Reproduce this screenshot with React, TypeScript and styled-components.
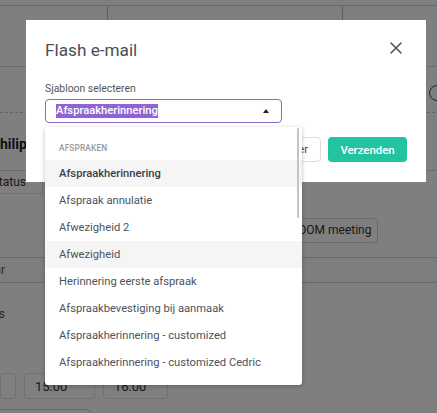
import styled, { createGlobalStyle } from 'styled-components';

const GlobalStyle = createGlobalStyle`
    html, body {
        margin: 0;
        padding: 0;
        background: #ffffff;
        font-family: Roboto, 'Liberation Sans', sans-serif;
    }
`;

const templates: string[] = [
    'Afspraakherinnering',
    'Afspraak annulatie',
    'Afwezigheid 2',
    'Afwezigheid',
    'Herinnering eerste afspraak',
    'Afspraakbevestiging bij aanmaak',
    'Afspraakherinnering - customized',
    'Afspraakherinnering - customized Cedric',
];

const selected = 'Afspraakherinnering';
const hovered = 'Afwezigheid';

const CloseIcon = () => (
    <svg width='12' height='12' viewBox='0 0 12 12'>
        <path
            d='M1 1 L11 11 M11 1 L1 11'
            stroke='#4f5660'
            strokeWidth='1.6'
            strokeLinecap='round'
        />
    </svg>
);

const Background = () => (
    <Page>
        <TopStrip />
        <HeaderRow>
            <HeaderCell />
            <HeaderCell />
            <HeaderCell $last />
        </HeaderRow>
        <IconRow>
            <RoundIcon />
        </IconRow>
        <NameRow>
            <Name>Philip</Name>
        </NameRow>
        <StatusRow>
            <StatusBox>Status</StatusBox>
        </StatusRow>
        <ZoomRow>
            <GhostButton>ZOOM meeting</GhostButton>
        </ZoomRow>
        <BandRow>
            <CutLabel>Locatie deur</CutLabel>
        </BandRow>
        <PlainRow>
            <CutLabel>Notities</CutLabel>
        </PlainRow>
        <TimeRow>
            <TimeBox $width={16} />
            <TimeBox $width={71}>15:00</TimeBox>
            <TimeBox $width={65}>16:00</TimeBox>
        </TimeRow>
        <FooterBox />
    </Page>
);

const App = () => (
    <>
        <GlobalStyle />
        <Viewport>
            <Background />
            <Overlay />
            <Modal>
                <ModalHeader>
                    <Title>Flash e-mail</Title>
                    <CloseButton>
                        <CloseIcon />
                    </CloseButton>
                </ModalHeader>
                <Label>Sjabloon selecteren</Label>
                <SelectWrap>
                    <SelectBox>
                        <SelectedText>{selected}</SelectedText>
                        <Caret />
                    </SelectBox>
                    <Dropdown>
                        <GroupTitle>Afspraken</GroupTitle>
                        {templates.map((t) => (
                            <Option
                                key={t}
                                $active={t === selected}
                                $hover={t === hovered}
                            >
                                {t}
                            </Option>
                        ))}
                        <ScrollThumb />
                    </Dropdown>
                </SelectWrap>
                <Actions>
                    <CancelButton>Annuleer</CancelButton>
                    <SendButton>Verzenden</SendButton>
                </Actions>
            </Modal>
        </Viewport>
    </>
);

const Viewport = styled.div`
    position: relative;
    width: 437px;
    height: 413px;
    overflow: hidden;
`;

const Page = styled.div`
    display: flex;
    flex-direction: column;
    color: #333;
    font-size: 13px;
`;

const TopStrip = styled.div`
    height: 5px;
    border-bottom: 1px solid #cfcfcf;
`;

const HeaderRow = styled.div`
    display: grid;
    grid-template-columns: 108px 235px 1fr;
    height: 60px;
    border-bottom: 1px solid #d8d8d8;
`;

const HeaderCell = styled.div<{ $last?: boolean }>`
    border-right: ${(p) => (p.$last ? 'none' : '1px solid #bdbdbd')};
`;

const IconRow = styled.div`
    display: flex;
    justify-content: flex-end;
    align-items: center;
    height: 45px;
    border-bottom: 1px dashed #c8c8c8;
    margin-right: -8px;
`;

const RoundIcon = styled.div`
    width: 14px;
    height: 14px;
    margin-top: 6px;
    border: 1.5px solid #444;
    border-radius: 50%;
`;

const NameRow = styled.div`
    height: 57px;
    display: flex;
    align-items: center;
    border-bottom: 1px solid #d6d6d6;
    overflow: hidden;
`;

const Name = styled.div`
    font-weight: 700;
    font-size: 14px;
    margin-left: -9px;
    margin-top: 4px;
    color: #222;
`;

const StatusRow = styled.div`
    display: flex;
    height: 47px;
    overflow: hidden;
`;

const StatusBox = styled.div`
    width: 60px;
    height: 23px;
    margin-left: -17px;
    border: 1px solid #e4e4e4;
    border-top: none;
    box-sizing: border-box;
    font-size: 12px;
    line-height: 23px;
    text-align: right;
    padding-right: 16px;
`;

const ZoomRow = styled.div`
    display: flex;
    justify-content: flex-end;
    padding-right: 59px;
    height: 39px;
`;

const GhostButton = styled.div`
    box-sizing: border-box;
    width: 88px;
    height: 25px;
    border: 1px solid #d4d4d4;
    border-radius: 4px;
    font-size: 12px;
    line-height: 23px;
    white-space: nowrap;
    text-align: right;
    padding-right: 8px;
`;

const BandRow = styled.div`
    height: 24px;
    border-top: 1px solid #d0d0d0;
    border-bottom: 1px solid #d0d0d0;
    background: #fdfdfd;
    display: flex;
    align-items: center;
    overflow: hidden;
`;

const PlainRow = styled.div`
    height: 38px;
    display: flex;
    align-items: center;
    overflow: hidden;
    margin-top: 12px;
`;

const CutLabel = styled.div`
    display: flex;
    justify-content: flex-end;
    width: 5px;
    white-space: nowrap;
    font-size: 12px;
    color: #555;
`;

const TimeRow = styled.div`
    display: flex;
    gap: 8px;
    margin-top: 40px;
    height: 26px;
`;

const TimeBox = styled.div<{ $width: number }>`
    width: ${(p) => p.$width}px;
    height: 26px;
    box-sizing: border-box;
    border: 1px solid #e2e2e2;
    border-radius: 3px;
    font-size: 13px;
    line-height: 26px;
    padding-left: 10px;
    color: #333;
`;

const FooterBox = styled.div`
    margin-top: 10px;
    width: 90px;
    height: 20px;
    border: 1px solid #d0d0d0;
    border-left: none;
    border-radius: 0 4px 0 0;
`;

const Overlay = styled.div`
    position: absolute;
    inset: 0;
    background: rgba(0, 0, 0, 0.5);
`;

const Modal = styled.div`
    position: absolute;
    left: 26px;
    top: 20px;
    width: 400px;
    height: 162px;
    box-sizing: border-box;
    background: #ffffff;
    padding: 19px 19px 0 19px;
    display: flex;
    flex-direction: column;
`;

const ModalHeader = styled.div`
    display: flex;
    justify-content: space-between;
    align-items: center;
    height: 22px;
`;

const Title = styled.h2`
    margin: 0;
    font-size: 17.2px;
    line-height: 22px;
    font-weight: 400;
    color: #4a4f55;
`;

const CloseButton = styled.div`
    display: flex;
    margin-right: 5px;
    margin-top: -4px;
`;

const Label = styled.div`
    margin-top: 21px;
    font-size: 10.4px;
    line-height: 13px;
    color: #555;
`;

const SelectWrap = styled.div`
    position: relative;
    margin-top: 4px;
    width: 237px;
`;

const SelectBox = styled.div`
    box-sizing: border-box;
    height: 24px;
    border: 1px solid #8c66c4;
    border-radius: 4px;
    display: flex;
    align-items: center;
    justify-content: space-between;
    padding: 0 12px 0 10px;
`;

const SelectedText = styled.span`
    background: #9063d3;
    color: #ffffff;
    font-size: 11.2px;
    font-weight: 500;
    line-height: 14px;
`;

const Caret = styled.span`
    width: 0;
    height: 0;
    border-left: 3px solid transparent;
    border-right: 3px solid transparent;
    border-bottom: 4px solid #222;
    margin-top: -1px;
`;

const Dropdown = styled.div`
    position: absolute;
    top: 28px;
    left: 0;
    width: 257px;
    height: 258px;
    box-sizing: border-box;
    background: #ffffff;
    border-radius: 3px;
    box-shadow: 0 1px 4px rgba(0, 0, 0, 0.25);
    padding-top: 13px;
    overflow: hidden;
    z-index: 2;
`;

const GroupTitle = styled.div`
    font-size: 8.4px;
    font-weight: 500;
    letter-spacing: 0.1px;
    text-transform: uppercase;
    color: #9a9a9a;
    padding: 0 14px;
    height: 20px;
    line-height: 16px;
`;

const Option = styled.div<{ $active: boolean; $hover: boolean }>`
    height: 27px;
    line-height: 27px;
    padding: 0 14px;
    font-size: 11.2px;
    white-space: nowrap;
    color: ${(p) => (p.$active ? '#3a3f45' : '#4d535a')};
    font-weight: ${(p) => (p.$active ? 500 : 400)};
    background: ${(p) => (p.$active || p.$hover ? '#f5f5f5' : '#ffffff')};
`;

const ScrollThumb = styled.div`
    position: absolute;
    top: 1px;
    right: 3px;
    width: 2px;
    height: 90px;
    background: #c4c4c4;
    border-radius: 1px;
`;

const Actions = styled.div`
    display: flex;
    justify-content: flex-end;
    gap: 7px;
    margin-top: 14px;
`;

const CancelButton = styled.button`
    box-sizing: border-box;
    height: 25px;
    padding: 0 12px;
    border: 1px solid #dcdcdc;
    border-radius: 4px;
    background: #ffffff;
    font-family: inherit;
    font-size: 11.2px;
    color: #444;
`;

const SendButton = styled.button`
    box-sizing: border-box;
    width: 79px;
    height: 25px;
    border: none;
    border-radius: 4px;
    background: #22c39f;
    color: #ffffff;
    font-family: inherit;
    font-size: 11.4px;
    font-weight: 500;
`;

export default App;
